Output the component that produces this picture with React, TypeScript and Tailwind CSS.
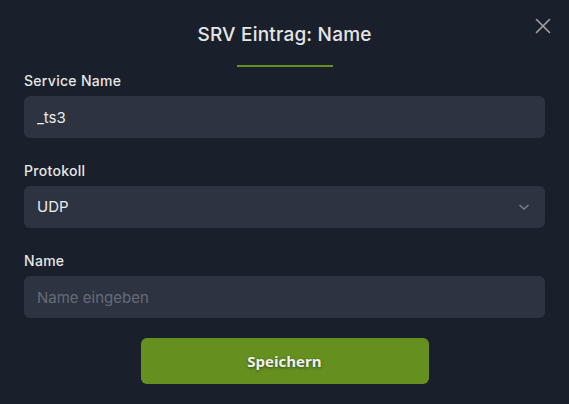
import { useState } from "react";

const App = () => {
  const [serviceName, setServiceName] = useState("_ts3");
  const [name, setName] = useState("");

  return (
    <div className="min-h-screen w-full bg-[#1a202b] font-['Inter',sans-serif] text-[#e6e6e6]">
      <div className="relative flex flex-col px-6 pt-[23px] pb-5">
        <button className="absolute right-[16px] top-[16px] text-[#a3a3a3]">
          <svg width="20" height="20" viewBox="0 0 20 20" fill="none" stroke="currentColor" strokeWidth="1.6" strokeLinecap="round">
            <path d="M3.5 3.5L16.5 16.5M16.5 3.5L3.5 16.5" />
          </svg>
        </button>

        <h2 className="text-center text-[19px] font-medium leading-[24px] tracking-[0.2px]">SRV Eintrag: Name</h2>
        <div className="mx-auto mt-[18px] h-[2px] w-[96px] bg-[#65901f]" />

        <label className="mt-[5px] text-[14px] font-medium leading-[18px] tracking-[0.3px]">Service Name</label>
        <input
          value={serviceName}
          onChange={(e) => setServiceName(e.target.value)}
          className="mt-[6px] h-[42px] w-full rounded-md bg-[#2d3340] px-[13px] text-[15px] text-[#ececec] outline-none"
        />

        <label className="mt-[24px] text-[14px] font-medium leading-[18px] tracking-[0.3px]">Protokoll</label>
        <div className="relative mt-[6px]">
          <select className="h-[42px] w-full appearance-none rounded-md bg-[#2d3340] px-[13px] text-[15px] text-[#ececec] outline-none">
            <option>UDP</option>
            <option>TCP</option>
          </select>
          <svg className="pointer-events-none absolute right-[15px] top-[16px] text-[#7b818c]" width="12" height="10" viewBox="0 0 12 10" fill="none" stroke="currentColor" strokeWidth="1.4">
            <path d="M1.5 3L6 7L10.5 3" />
          </svg>
        </div>

        <label className="mt-[24px] text-[14px] font-medium leading-[18px] tracking-[0.3px]">Name</label>
        <input
          value={name}
          onChange={(e) => setName(e.target.value)}
          placeholder="Name eingeben"
          className="mt-[6px] h-[42px] w-full rounded-md bg-[#2d3340] px-[13px] text-[15px] text-[#ececec] outline-none placeholder:text-[#666c77]"
        />

        <button className="mx-auto mt-[20px] h-[46px] w-[288px] rounded-md bg-[#65901f] font-['Open_Sans',sans-serif] text-[15px] font-bold text-[#f0f0f0] [text-shadow:0_1px_3px_rgba(0,0,0,0.5)]">
          Speichern
        </button>
      </div>
    </div>
  );
};

export default App;
